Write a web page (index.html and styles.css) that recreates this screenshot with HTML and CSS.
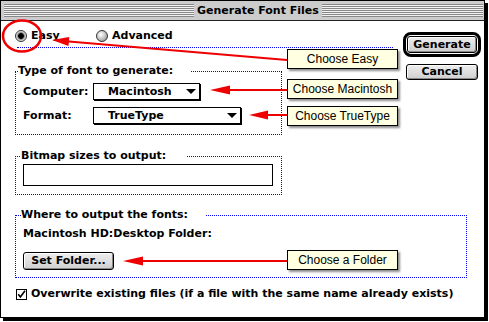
FILE: index.html
```html
<!DOCTYPE html>
<html>
<head>
<meta charset="utf-8">
<link rel="stylesheet" href="styles.css">
</head>
<body>
<div class="page">
  <div class="window">
    <div class="titlebar">
      <div class="stripes stripes-left"></div>
      <div class="title">Generate Font Files</div>
      <div class="stripes stripes-right"></div>
    </div>
    <div class="content">
      <div class="top">
        <div class="left">
          <div class="radios">
            <div class="radio-item radio-item-first"><span class="radio radio-on"></span>Easy</div>
            <div class="radio-item"><span class="radio"></span>Advanced</div>
          </div>
          <fieldset class="group group-type">
            <legend class="legend legend-type">Type of font to generate:</legend>
            <div class="field-row field-row-first">
              <span class="field-label">Computer:</span>
              <div class="popup popup-short"><span>Macintosh</span><svg class="popup-arrow" width="10" height="5" viewBox="0 0 10 5"><polygon points="0,0 10,0 5,5" fill="#000"/></svg></div>
            </div>
            <div class="field-row">
              <span class="field-label">Format:</span>
              <div class="popup popup-long"><span>TrueType</span><svg class="popup-arrow" width="10" height="5" viewBox="0 0 10 5"><polygon points="0,0 10,0 5,5" fill="#000"/></svg></div>
            </div>
          </fieldset>
          <fieldset class="group group-bitmap">
            <legend class="legend legend-bitmap">Bitmap sizes to output:</legend>
            <div class="textbox"></div>
          </fieldset>
        </div>
        <div class="buttons">
          <div class="default-ring"><button class="btn btn-default">Generate</button></div>
          <button class="btn btn-cancel">Cancel</button>
        </div>
      </div>
      <fieldset class="group group-where">
        <legend class="legend legend-where">Where to output the fonts:</legend>
        <div class="path">Macintosh HD:Desktop Folder:</div>
        <button class="btn btn-folder">Set Folder...</button>
      </fieldset>
      <div class="check-row">
        <span class="checkbox"><svg width="9" height="9" viewBox="0 0 9 9"><path d="M1.2 4.2 L3.4 7 L8 0.8" fill="none" stroke="#000" stroke-width="1.6"/></svg></span>
        <span>Overwrite existing files (if a file with the same name already exists)</span>
      </div>
    </div>
  </div>

  <svg class="annotations" width="489" height="322" viewBox="0 0 489 322">
    <ellipse cx="22" cy="36" rx="19" ry="15.5" fill="none" stroke="#ee0000" stroke-width="2.5"/>
    <line x1="287" y1="60" x2="66" y2="41.2" stroke="#ee0000" stroke-width="2"/>
    <polygon points="52,40 69.3,36.9 68.5,45.9" fill="#ee0000"/>
    <line x1="287" y1="90" x2="228" y2="90" stroke="#ee0000" stroke-width="2"/>
    <polygon points="210,90 230,85.5 230,94.5" fill="#ee0000"/>
    <line x1="287" y1="115" x2="266" y2="115" stroke="#ee0000" stroke-width="2"/>
    <polygon points="249,115 268,110.5 268,119.5" fill="#ee0000"/>
    <line x1="287" y1="261" x2="141" y2="261" stroke="#ee0000" stroke-width="2"/>
    <polygon points="123,261 143,256.5 143,265.5" fill="#ee0000"/>
  </svg>

  <div class="callout callout-easy">Choose Easy</div>
  <div class="callout callout-mac">Choose Macintosh</div>
  <div class="callout callout-tt">Choose TrueType</div>
  <div class="callout callout-folder">Choose a Folder</div>
</div>
</body>
</html>
```

FILE: styles.css
```css
* { box-sizing: border-box; }

body {
  margin: 0;
  background: #fff;
  color: #000;
  font-family: "DejaVu Sans", sans-serif;
  font-size: 11px;
  font-weight: bold;
  line-height: 14px;
}

.page {
  position: relative;
  width: 489px;
  height: 322px;
  overflow: hidden;
}

.window {
  width: 485px;
  height: 318px;
  border: 1px solid #000;
  box-shadow: 3px 3px 0 #000;
  background: #fff;
  display: flex;
  flex-direction: column;
}

/* Title bar */
.titlebar {
  flex: none;
  height: 20px;
  display: flex;
  align-items: center;
  background: #cccccc;
  border-bottom: 1px solid #222;
  padding: 0 1px 0 3px;
}
.stripes {
  height: 13px;
  background: repeating-linear-gradient(to bottom, #888 0 1px, #f2f2f2 1px 2px);
}
.stripes-left { width: 190px; flex: none; }
.stripes-right { flex: 1; }
.title {
  padding: 0 3px;
  line-height: 19px;
  white-space: nowrap;
}

/* Content */
.content {
  flex: 1;
  padding-left: 14px;
}
.top { display: flex; }
.left { width: 378px; flex: none; }

.radios {
  display: flex;
  margin: 8px 0 0 2px;
  width: 376px;
  height: 19px;
  padding-bottom: 4px;
  border-bottom: 1px dotted #0000ee;
}
.radio-item {
  display: flex;
  align-items: center;
  gap: 4px;
  height: 14px;
}
.radio-item-first {
  margin-left: -2px;
  width: 81px;
}
.radio {
  width: 12px;
  height: 12px;
  border-radius: 50%;
  border: 1px solid #333;
  background: radial-gradient(circle at 38% 35%, #fff 0, #e4e4e4 25%, #aaa 70%, #777 100%);
}
.radio-on {
  background: radial-gradient(circle, #000 0 2.5px, #666 3px, #bbb 4px, #eee 5px);
}

/* Groups */
.group {
  margin: 0;
  padding: 0;
  min-width: 0;
  width: 267px;
  border: 1px dotted #0000ee;
}
.legend {
  padding: 0;
  margin-left: 5px;
  line-height: 14px;
  white-space: nowrap;
}
.legend-type { margin-left: 2px; width: 172px; }
.legend-bitmap { width: 165px; }
.legend-where { width: 184px; }

.group-type {
  margin-top: 16px;
  padding-bottom: 10px;
}
.field-row {
  display: flex;
  align-items: center;
  height: 17px;
  margin: 7px 0 0 7px;
}
.field-row-first { margin-top: 5px; }
.field-label { width: 70px; flex: none; }
.popup {
  height: 17px;
  border: 1px solid #000;
  box-shadow: 1px 1px 0 #000;
  background: #fff;
  display: flex;
  align-items: center;
  justify-content: space-between;
  padding: 0 3px 0 14px;
  line-height: 15px;
}
.popup-short { width: 107px; }
.popup-long { width: 148px; }
.popup-arrow { display: block; }

.group-bitmap {
  margin-top: 14px;
  padding-bottom: 8px;
}
.textbox {
  margin: 1px 0 0 7px;
  width: 250px;
  height: 22px;
  border: 1px solid #000;
  background: #fff;
}

.group-where {
  width: 452px;
  margin-top: 13px;
  padding-bottom: 7px;
}
.path { margin: 5px 0 0 7px; }

/* Buttons */
.buttons {
  width: 78px;
  margin-left: 10px;
  padding-top: 11px;
  display: flex;
  flex-direction: column;
}
.default-ring {
  width: 78px;
  height: 25px;
  border: 3px solid #000;
  border-radius: 8px;
  padding: 1px;
  background: #fff;
}
.btn {
  font: inherit;
  color: #000;
  padding: 0;
  border: 1px solid #000;
  border-radius: 3px;
  background: linear-gradient(#eeeeee, #cfcfcf);
  box-shadow: inset 1px 1px 0 #fff, inset -1px -1px 0 #8a8a8a;
  line-height: 14px;
  text-align: center;
}
.btn-default {
  display: block;
  width: 100%;
  height: 100%;
}
.btn-cancel {
  width: 72px;
  height: 16px;
  margin: 7px 0 0 3px;
}
.btn-folder {
  display: block;
  width: 91px;
  height: 18px;
  margin: 11px 0 0 7px;
}

/* Checkbox row */
.check-row {
  display: flex;
  align-items: center;
  margin: 9px 0 0 1px;
  height: 14px;
}
.checkbox {
  width: 11px;
  height: 11px;
  border: 1px solid #000;
  background: #fff;
  margin-right: 4px;
  display: flex;
  align-items: center;
  justify-content: center;
}
.checkbox svg { display: block; }

/* Annotations */
.annotations {
  position: absolute;
  left: 0;
  top: 0;
  pointer-events: none;
}
.callout {
  position: absolute;
  left: 287px;
  width: 111px;
  height: 20px;
  background: #ffffe1;
  border: 1px solid #000;
  box-shadow: 2px 2px 2px rgba(0, 0, 0, 0.45);
  font-family: "Liberation Sans", Arial, sans-serif;
  font-size: 12px;
  font-weight: normal;
  line-height: 18px;
  text-align: center;
  white-space: nowrap;
}
.callout-easy { top: 49px; }
.callout-mac { top: 79px; }
.callout-tt { top: 106px; }
.callout-folder { top: 250px; }
```
